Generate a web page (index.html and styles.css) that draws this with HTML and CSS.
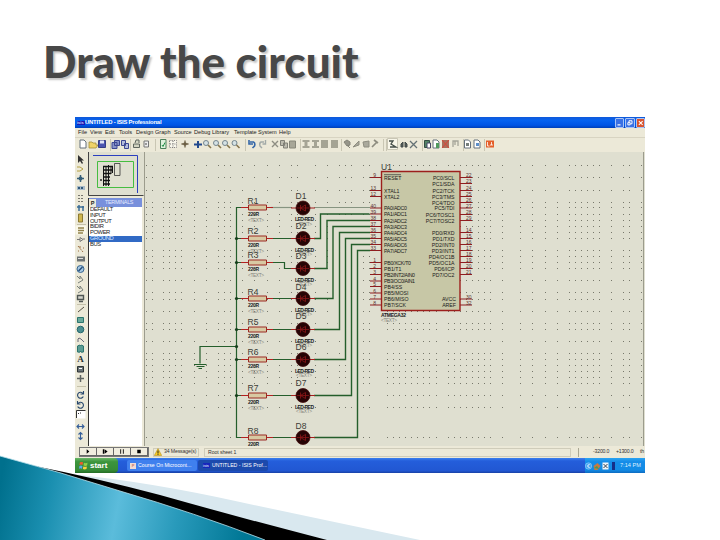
FILE: index.html
```html
<!DOCTYPE html>
<html lang="en">
<head>
<meta charset="utf-8">
<title>Draw the circuit</title>
<link rel="stylesheet" href="styles.css">
</head>
<body>
<main class="slide">
  <svg class="swoosh" viewBox="0 450 430 90" width="430" height="90">
    <defs>
      <linearGradient id="teal" gradientUnits="userSpaceOnUse" x1="0" y1="485" x2="245" y2="530">
        <stop offset="0" stop-color="#00708d"/><stop offset=".2" stop-color="#1a8fb0"/><stop offset=".48" stop-color="#5bbcdb"/><stop offset=".72" stop-color="#299abb"/><stop offset="1" stop-color="#007795"/>
      </linearGradient>
    </defs>
    <path d="M70 474Q150 482 240 502Q320 519 420 540H300Z" fill="#d9e8ef"/>
    <path d="M30 465Q100 479 160 495Q245 519 327 540H262Q150 502 30 465Z" fill="#000"/>
    <path d="M0 456Q60 472 120 491Q195 513 265 540H0Z" fill="url(#teal)"/>
    <path d="M0 456Q60 472 120 491Q195 513 265 540" fill="none" stroke="#b8dfeb" stroke-width=".8"/>
  </svg>

  <h1 class="title">Draw the circuit</h1>

  <section class="window">
    <header class="titlebar">
      <span class="app-icon">isis</span>
      <span class="caption">UNTITLED - ISIS Professional</span>
      <span class="win-buttons">
        <svg viewBox="0 0 10 10"><path d="M2 7.5h4" stroke="#fff" stroke-width="1.6"/></svg>
        <svg viewBox="0 0 10 10"><path d="M4 4V2h4v4H6M2.5 4.5h3v3h-3z" stroke="#fff" fill="none" stroke-width="1.3"/></svg>
        <svg class="close" viewBox="0 0 10 10"><path d="M2.5 2.5l5 5m0-5l-5 5" stroke="#fff" stroke-width="1.4"/></svg>
      </span>
    </header>
    <nav class="menu">
      <span>File</span><span>View</span><span>Edit</span><span>Tools</span><span>Design</span><span>Graph</span><span>Source</span><span>Debug</span><span>Library</span><span>Template</span><span>System</span><span>Help</span>
    </nav>

    <svg class="toolbar" viewBox="75 138 570 14" width="570" height="14">
      <defs>
        <g id="lens"><circle cx="-1" cy="-1" r="2.5" fill="#d5e2e4" stroke="#75868f"/><path d="M1 1l3 3" stroke="#85754c" stroke-width="1.6"/></g>
        <g id="page"><path d="M-3-4h4l2 2v6h-6z" fill="#fff" stroke="#65707c"/></g>
        <g id="block"><path d="M-3.500-4h7v2h-2v4h2v2h-7v-2h2v-4h-2z" fill="#a5a494"/></g>
      </defs>
      <path d="M110.500 139v12M130.500 139v12M155.500 139v12M245.500 139v12M300.500 139v12M341.500 139v12M383.500 139v12M386.500 139v12M422.500 139v12M463.500 139v12M484.500 139v12" stroke="#c9c6b3"/>
      <use href="#page" x="83" y="144"/>
      <path d="M89 148v-6h3l1 1h3v2h2l-2 3z" fill="#f0d36a" stroke="#9a8432" stroke-width=".7"/>
      <path d="M98.500 140.500h7v7h-7z" fill="#4a55b0" stroke="#363e86"/><path d="M100 140.500h4v3h-4z" fill="#dfe3f5"/>
      <path d="M112 142.500h5v6h-5zM114.500 140.500h5v5h-5z" fill="#8793c8" stroke="#3d4791"/>
      <path d="M121.500 140.500h4v5h-4zM124.500 143.500h4v5h-4z" fill="#b5bddd" stroke="#3d4791"/>
      <path d="M135 143l1-3h3v3M133.500 144h6v3.500h-6z" fill="#d2d4c2" stroke="#5f665f"/>
      <path d="M144 141h4.500v6H144z" fill="#eee" stroke="#777"/><path d="M145 144h2" stroke="#444"/>
      <path d="M160.500 139.500h5.500v9h-5.500z" fill="#dff0dc" stroke="#4c805b"/><path d="M162 145l1 1.500 2-4" fill="none" stroke="#1f8f46"/>
      <path d="M169.500 140.500h7v7h-7zM173 141v7M170 144h6" fill="#f9f8ed" stroke="#777" stroke-dasharray="1 1.200"/>
      <path d="M181.500 144h7M185 140.500v7" stroke="#6b5f44" stroke-width="1.300"/><circle cx="185" cy="144" r="1.700" fill="#6b5f44"/>
      <path d="M194 144.500h8M198 141v7" stroke="#224a8e" stroke-width="2"/>
      <use href="#lens" x="207" y="144"/><use href="#lens" x="217" y="144"/><use href="#lens" x="226" y="144"/><use href="#lens" x="235.500" y="144"/>
      <path d="M250 142h3.500q2 1 1 4l-2 2M249 140v4h4" fill="none" stroke="#3567a8" stroke-width="1.600"/>
      <path d="M264 142h-3q-2 1-1 4l2 2M265.500 140v4h-3" fill="none" stroke="#a2aaa8" stroke-width="1.400"/>
      <path d="M272 141l6 6m0-6l-6 6" stroke="#8e8e83" stroke-width="1.400"/>
      <path d="M280.500 140.500h4v5h-4zM283.500 143h4v5h-4z" fill="#bdbcaf" stroke="#808077"/>
      <path d="M289.500 141h6v7h-6z" fill="#a8a798" stroke="#88887b"/>
      <use href="#block" x="306" y="144"/><use href="#block" x="315.500" y="144"/>
      <path d="M321 140h7v8h-7zM331 140h7v8h-7z" fill="#a5a494"/>
      <path d="M344 142l3-2 3 2v3l-3 1zM347 145l3 3" fill="#969589" stroke="#858478"/>
      <path d="M353 147l6-6v4zM363 142l6-1v6h-5z" fill="#aaa99c" stroke="#8e8d80"/><path d="M372 147l5-5M374 140l4 3" stroke="#8e8d80" stroke-width="1.700"/>
      <path d="M387.500 138.500h10v11h-10z" fill="#f8f6e9" stroke="#c9c6b5"/><path d="M389 141h4l-2 3 5 3h-6" fill="none" stroke="#444d48" stroke-width="1.300"/>
      <path d="M401 147v-3l2-2v5zM405 147v-5l2 2v3z" fill="#56615e" stroke="#404946"/>
      <path d="M410 141l7 7m0-7l-7 7" stroke="#657275" stroke-width="1.300"/>
      <path d="M424.500 140.500h5v7h-5z" fill="#538366" stroke="#334d43"/><path d="M427 143h3.500v5H427z" fill="#fff" stroke="#446"/>
      <use href="#page" x="436" y="144"/><path d="M436 143h3v5h-3z" fill="#509b5e"/>
      <path d="M442 140h7v8h-7z" fill="#a7715d"/><path d="M442 140l7 8m0-8l-7 8" stroke="#db4438"/>
      <path d="M453 147v-6h5v5M455 141v4" fill="none" stroke="#a5a599" stroke-width="1.300"/>
      <use href="#page" x="467.500" y="144"/><path d="M466 143h3v3h-3z" fill="#757d79"/>
      <use href="#page" x="477" y="144"/><path d="M476 143h3v3h-3z" fill="#5c8fca"/>
      <path d="M486 140.500h8v7h-8z" fill="#e45f2a"/><path d="M487.500 142v4h2m2-4v3m-1.500 0h3" fill="none" stroke="#fff" stroke-width=".8"/>
    </svg>

    <div class="workspace">
      <svg class="tools" viewBox="75 152 13 294" width="13" height="294">
        <path d="M77 224.500h9M77 304.500h9M77 386.500h9" stroke="#c5c1aa"/>
        <path d="M78 155v8l2-2 2 3 1-1-1.500-2.500H84z" fill="#333"/>
        <path d="M77 167h3l3 2-3 2h-3" fill="none" stroke="#b5a044"/>
        <path d="M77 178.500h7M80.500 175v7" stroke="#365f79" stroke-width="1.500"/><circle cx="80.500" cy="178.500" r="2" fill="#365f79"/>
        <path d="M77 186h8v4h-8z" fill="#a8bac8"/><path d="M78 188h6" stroke="#315a7c" stroke-width="2" stroke-dasharray="2 1"/>
        <path d="M78 195.500h6M78 198.500h6M78 201.500h6" stroke="#77766e" stroke-dasharray="2 1"/>
        <path d="M77 207h7M79 205v6M83 206v5" stroke="#3b6d96" stroke-width="1.500"/>
        <path d="M78.500 214h4v8h-4z" fill="#cfb64f" stroke="#8d7a32"/>
        <path d="M75.500 225.500h11v9h-11z" fill="#faf8ea"/><path d="M78 228h6M78 230.500h6M78 233h5" stroke="#92824c" stroke-width="1.300"/>
        <path d="M77 239.500h3v-2l3 2-3 2v-2M83 239h2" fill="none" stroke="#777"/>
        <path d="M78 246l5 6M78 251h1M83 248h1M79 247h2" stroke="#9b6e43" stroke-dasharray="2 1"/>
        <path d="M77 256.500h8v5h-8z" fill="#6c7273"/><path d="M78 258.500h5" stroke="#ddd"/>
        <circle cx="80.500" cy="269" r="3.500" fill="#a5c8e3" stroke="#39658f"/><path d="M78.500 271l4-4" stroke="#234a75" stroke-width="1.500"/>
        <path d="M77 276l3 3v-3l3 4M78 283l5-3M77 286l3 3v-3l3 4M78 293l5-3" fill="none" stroke="#777f7a"/>
        <path d="M77.500 295.500h6v4h-6zM79 301.500h4" fill="#d4d5cd" stroke="#505754" stroke-width="1.400"/>
        <path d="M78 312l6-5" stroke="#554f43"/>
        <path d="M77.500 317.500h6v5h-6z" fill="#69a99c" stroke="#2b756e"/>
        <circle cx="80.500" cy="329.500" r="3.300" fill="#4b8e91" stroke="#22666b"/>
        <path d="M78 342q-1-8 6 0" fill="none" stroke="#667"/>
        <path d="M77.500 346q3-2 3 0 0-2 3 0v6q-3 1-3-1 0 2-3 1z" fill="#5b9b93" stroke="#2b756e"/>
        <text class="letter" x="77.300" y="362">A</text>
        <path d="M77.500 366.500h6v5.500h-6z" fill="#697276" stroke="#2d3334"/><path d="M79 368.500h3" stroke="#fff"/>
        <path d="M77 378.500h7M80.500 375v7" stroke="#5f6462" stroke-width="1.500"/>
        <path d="M83 393.500a3 3 0 1 0 .3 3M83.500 391v3h-3" fill="none" stroke="#28486e" stroke-width="1.100"/>
        <path d="M78 403.500a3 3 0 1 1-.3 3M77.500 401v3h3" fill="none" stroke="#28486e" stroke-width="1.100"/>
        <path d="M76.500 410.500h9v8h-9z" fill="#fff"/><path d="M76.500 418v-7.500h9" fill="none" stroke="#333"/><path d="M78 413.500h1M80 413h1" stroke="#333"/>
        <path d="M77 426.500h7M79 424.500l-2 2 2 2m3-4l2 2-2 2M80.500 432.500v7M78.500 434.500l2-2 2 2m-4 3l2 2 2-2" fill="none" stroke="#365f9a" stroke-width="1.100"/>
      </svg>

      <aside class="side">
        <svg class="overview" viewBox="88 152 56 44" width="56" height="44">
          <path d="M88.500 152v43.500h55" fill="none" stroke="#444"/>
          <path d="M93 155.500h44.500V193" fill="none" stroke="#2b3fbf"/>
          <path d="M97.500 161.500h36v26h-36z" fill="none" stroke="#45bd40"/>
          <path d="M114.500 163.500h5.500v12h-5.500z" fill="none" stroke="#333" stroke-width=".8"/>
          <path d="M103.500 166v20M106 166v20M108.500 165v21M111 166v8M112.500 166v7" stroke="#111"/>
          <path d="M103 166.500h10M103 170h9M103 173.500h8M103 177h7M103 180.500h7M103 184h7M101 179v2" stroke="#111" stroke-width="1.300"/>
        </svg>
        <div class="picker">
          <div class="picker-head"><b>P</b><span>TERMINALS</span></div>
          <ul>
            <li>DEFAULT</li><li>INPUT</li><li>OUTPUT</li><li>BIDIR</li><li>POWER</li><li class="on">GROUND</li><li>BUS</li>
          </ul>
        </div>
      </aside>

      <svg class="sheet" viewBox="144 152 501 294" width="501" height="294">
        <defs>
          <path id="r" stroke="#77786b" stroke-width="1" d="M146 .5h1M152 .5h1M163 .5h1M169 .5h1M175 .5h1M181 .5h1M194 .5h1M206 .5h1M218 .5h1M224 .5h1M230 .5h1M242 .5h1M254 .5h1M267 .5h1M279 .5h1M291 .5h1M297 .5h1M315 .5h1M327 .5h1M339 .5h1M345 .5h1M351 .5h1M363 .5h1M369 .5h1M387 .5h1M393 .5h1M399 .5h1M405 .5h1M411 .5h1M417 .5h1M423 .5h1M429 .5h1M436 .5h1M448 .5h1M454 .5h1M460 .5h1M466 .5h1M472 .5h1M478 .5h1M484 .5h1M490 .5h1M502 .5h1M520 .5h1M532 .5h1M545 .5h1M557 .5h1M569 .5h1M575 .5h1M581 .5h1M587 .5h1M593 .5h1M599 .5h1M611 .5h1M623 .5h1M629 .5h1M641 .5h1"/>
          <g id="res">
            <path d="M241 0h7M267 0h6" stroke="#b32020"/>
            <path d="M248.500-2.500h18v5h-18z" fill="#d8c9a3" stroke="#9b2922"/>
            <text class="tiny" x="248" y="8.500" textLength="11">220R</text>
            <text class="ghost" x="248" y="14.500" textLength="16">&lt;TEXT&gt;</text>
          </g>
          <g id="led">
            <path d="M291 0h24" stroke="#a61e1e"/>
            <circle cx="303" cy="0" r="7" fill="#260405" stroke="#430b0b" stroke-width=".8"/>
            <path d="M297 0h12M300.500-3v6M305.500-3l-5 3 5 3z" fill="none" stroke="#8a1717" stroke-width=".8"/>
            <text class="tiny" x="295" y="13" textLength="19">LED-RED</text>
            <text class="ghost" x="296" y="17.500" textLength="16">&lt;TEXT&gt;</text>
          </g>
        </defs>
        <g>
          <use href="#r" y="165"/><use href="#r" y="177"/><use href="#r" y="190"/><use href="#r" y="202"/><use href="#r" y="207"/><use href="#r" y="214"/><use href="#r" y="220"/><use href="#r" y="226"/><use href="#r" y="232"/><use href="#r" y="238"/><use href="#r" y="250"/><use href="#r" y="256"/><use href="#r" y="262"/><use href="#r" y="268"/><use href="#r" y="280"/><use href="#r" y="292"/><use href="#r" y="299"/><use href="#r" y="311"/><use href="#r" y="323"/><use href="#r" y="329"/><use href="#r" y="341"/><use href="#r" y="353"/><use href="#r" y="359"/><use href="#r" y="365"/><use href="#r" y="371"/><use href="#r" y="377"/><use href="#r" y="383"/><use href="#r" y="395"/><use href="#r" y="407"/><use href="#r" y="437"/>
        </g>
        <path d="M144.500 152v294M643.500 152v294" stroke="#9c9c8d"/>

        <g fill="none" stroke="#245e2b" stroke-width="1.200">
          <path d="M241 207.500h-4.500v230h4.500M236.500 346.500h-36.500v17"/>
          <path d="M236.500 238.500h5M236.500 262.500h5M236.500 298.500h5M236.500 329.500h5M236.500 359.500h5M236.500 395.500h5"/>
          <path d="M271 207.500h20" stroke="#869480"/>
          <path d="M271 238.500h20M271 262.500h13.500v6h7M271 298.500h20M271 329.500h20M271 359.500h20M271 395.500h20M271 437.500h20"/>
          <path d="M314 207.500h56" stroke="#869480"/>
          <path d="M314 238.500h6.500v-24.500h49M314 268.500h13v-48h43M314 298.500h19v-72h37M314 329.500h25.500v-97h30.500M314 359.500h31.500v-121h24.500M314 395.500h37.500v-151h18.500M314 437.500h43.500v-187h12.500" stroke-width="1.400"/>
          <path d="M194 364.500h12.500M196.500 366.500h8M198.500 368.500h3.500"/>
        </g>
        <g fill="#163e1b"><circle cx="236.500" cy="238.500" r="1.600"/><circle cx="236.500" cy="262.500" r="1.600"/><circle cx="236.500" cy="298.500" r="1.600"/><circle cx="236.500" cy="329.500" r="1.600"/><circle cx="236.500" cy="346.500" r="1.600"/><circle cx="236.500" cy="359.500" r="1.600"/><circle cx="236.500" cy="395.500" r="1.600"/></g>

        <use href="#res" y="207.500"/><use href="#res" y="238.500"/><use href="#res" y="262.500"/><use href="#res" y="298.500"/><use href="#res" y="329.500"/><use href="#res" y="359.500"/><use href="#res" y="395.500"/><use href="#res" y="437.500"/>
        <use href="#led" y="208"/><use href="#led" y="238.500"/><use href="#led" y="268.500"/><use href="#led" y="298.500"/><use href="#led" y="329.500"/><use href="#led" y="359.500"/><use href="#led" y="395.500"/><use href="#led" y="437.500"/>
        <g class="ref">
          <text x="247.500" y="203.500">R1</text><text x="247.500" y="234">R2</text><text x="247.500" y="258">R3</text><text x="247.500" y="294.500">R4</text><text x="247.500" y="324.500">R5</text><text x="247.500" y="355">R6</text><text x="247.500" y="391">R7</text><text x="247.500" y="433.500">R8</text>
          <text x="295.500" y="198.500">D1</text><text x="295.500" y="229">D2</text><text x="295.500" y="259">D3</text><text x="295.500" y="290">D4</text><text x="295.500" y="319">D5</text><text x="295.500" y="350">D6</text><text x="295.500" y="386">D7</text><text x="295.500" y="428.500">D8</text>
          <text x="381" y="169.500">U1</text>
        </g>

        <path d="M370 177.500h11M370 190.500h11M370 196.500h11M370 208h11M370 214h11M370 220.500h11M370 226.500h11M370 232.500h11M370 238.500h11M370 244.500h11M370 250.500h11M370 262.500h11M370 268.500h11M370 274.500h11M370 281h11M370 286.500h11M370 293h11M370 299h11M370 305h11M460 177.500h12M460 183.500h12M460 190.500h12M460 196.500h12M460 202.500h12M460 208h12M460 214.500h12M460 220.500h12M460 232.500h12M460 238.500h12M460 244.500h12M460 250.500h12M460 256.500h12M460 262.500h12M460 268.500h12M460 274.500h12M460 299h12M460 305h12" stroke="#8f1d20"/>
        <path d="M381.500 171.500h78.500v139h-78.500z" fill="#c7c7a6" stroke="#9c1f1c" stroke-width="1.400"/>
        <path d="M384 174.700h17" stroke="#333" stroke-width=".7"/>
        <g class="pin">
          <text x="384" y="179.500">RESET</text><text x="384" y="192.500">XTAL1</text><text x="384" y="198.500">XTAL2</text>
          <text x="384" y="210" textLength="23">PA0/ADC0</text><text x="384" y="216" textLength="23">PA1/ADC1</text><text x="384" y="222.500" textLength="23">PA2/ADC2</text><text x="384" y="228.500" textLength="23">PA3/ADC3</text><text x="384" y="234.500" textLength="23">PA4/ADC4</text><text x="384" y="240.500" textLength="23">PA5/ADC5</text><text x="384" y="246.500" textLength="23">PA6/ADC6</text><text x="384" y="252.500" textLength="23">PA7/ADC7</text>
          <text x="384" y="264.500" textLength="27">PB0/XCK/T0</text><text x="384" y="270.500">PB1/T1</text><text x="384" y="276.500" textLength="31">PB2/INT2/AIN0</text><text x="384" y="283" textLength="31">PB3/OC0/AIN1</text><text x="384" y="288.500">PB4/SS</text><text x="384" y="295">PB5/MOSI</text><text x="384" y="301">PB6/MISO</text><text x="384" y="307">PB7/SCK</text>
        </g>
        <g class="pin right">
          <text x="454.500" y="179.500">PC0/SCL</text><text x="454.500" y="185.500">PC1/SDA</text><text x="454.500" y="192.500">PC2/TCK</text><text x="454.500" y="198.500">PC3/TMS</text><text x="454.500" y="204.500">PC4/TDO</text><text x="454.500" y="210">PC5/TDI</text><text x="454.500" y="216.500">PC6/TOSC1</text><text x="454.500" y="222.500">PC7/TOSC2</text>
          <text x="454.500" y="234.500">PD0/RXD</text><text x="454.500" y="240.500">PD1/TXD</text><text x="454.500" y="246.500">PD2/INT0</text><text x="454.500" y="252.500">PD3/INT1</text><text x="454.500" y="258.500">PD4/OC1B</text><text x="454.500" y="264.500">PD5/OC1A</text><text x="454.500" y="270.500">PD6/ICP</text><text x="454.500" y="276.500">PD7/OC2</text><text x="456" y="301">AVCC</text><text x="456" y="307">AREF</text>
        </g>
        <g class="pin num right">
          <text x="376" y="177">9</text><text x="376" y="190">13</text><text x="376" y="196">12</text><text x="376" y="207.500">40</text><text x="376" y="213.500">39</text><text x="376" y="220">38</text><text x="376" y="226">37</text><text x="376" y="232">36</text><text x="376" y="238">35</text><text x="376" y="244">34</text><text x="376" y="250">33</text><text x="376" y="262">1</text><text x="376" y="268">2</text><text x="376" y="274">3</text><text x="376" y="280.500">4</text><text x="376" y="286">5</text><text x="376" y="292.500">6</text><text x="376" y="298.500">7</text><text x="376" y="304.500">8</text>
          <text x="471.500" y="177">22</text><text x="471.500" y="183">23</text><text x="471.500" y="190">24</text><text x="471.500" y="196">25</text><text x="471.500" y="202">26</text><text x="471.500" y="207.500">27</text><text x="471.500" y="214">28</text><text x="471.500" y="220">29</text><text x="471.500" y="232">14</text><text x="471.500" y="238">15</text><text x="471.500" y="244">16</text><text x="471.500" y="250">17</text><text x="471.500" y="256">18</text><text x="471.500" y="262">19</text><text x="471.500" y="268">20</text><text x="471.500" y="274">21</text><text x="471.500" y="298.500">30</text><text x="471.500" y="304.500">32</text>
        </g>
        <text class="tiny" x="381" y="316.500" textLength="25">ATMEGA32</text>
        <text class="ghost" x="381" y="322" textLength="16">&lt;TEXT&gt;</text>
      </svg>
    </div>

    <footer class="status">
      <div class="sim">
        <svg viewBox="0 0 17 8"><path d="M7 1.500v5l3-2.500z"/></svg>
        <svg viewBox="0 0 17 8"><path d="M6 1.500h1.500v5H6zM8 1.500v5l3.500-2.500z"/></svg>
        <svg viewBox="0 0 17 8"><path d="M6.500 1.500h1v5h-1zM9.500 1.500h1v5h-1z"/></svg>
        <svg viewBox="0 0 17 8"><path d="M6.500 2h4v4h-4z"/></svg>
      </div>
      <div class="messages">
        <svg viewBox="0 0 8 8" width="8" height="8"><path d="M4 .5L7.700 7.500H.3z" fill="#f8cb27" stroke="#a98310" stroke-width=".5"/><path d="M4 2.500v3m0 .7v.8" stroke="#222"/></svg>
        <span>34 Message(s)</span>
      </div>
      <div class="sheet-name">Root sheet 1</div>
      <div class="coords"><span>-3200.0</span><span>+1300.0</span><span>th</span></div>
    </footer>

    <footer class="taskbar">
      <div class="start">
        <svg viewBox="0 0 10 10" width="9" height="9"><path d="M1 1.500q2-1 3.500 0L4 4.500q-2-1-3.500 0z" fill="#ef5b2c"/><path d="M5.500 2q2 1 4 0L9 5q-2 1-4 0z" fill="#8ed04a"/><path d="M.5 5.500q1.500-1 3.300 0L3.300 8.500Q1.500 7.500 0 8.500z" fill="#5aa7f0"/><path d="M4.800 6q2 1 4 0l-.5 3q-2 1-4 0z" fill="#fbd13c"/></svg>
        <span>start</span>
      </div>
      <div class="task"><i class="ppt">P</i><span>Course On Microcont...</span></div>
      <div class="task active"><i>isis</i><span>UNTITLED - ISIS Prof...</span></div>
      <div class="tray">
        <svg viewBox="0 0 32 10" width="32" height="10"><circle cx="3.500" cy="5" r="3.200" fill="#4aa5f0" stroke="#9bd5ff" stroke-width=".6"/><path d="M4.500 3L2.500 5l2 2" fill="none" stroke="#fff"/><path d="M8.500 5l4-3 3 3-3 4h-3z" fill="#c77843"/><path d="M9 7l3-2 2 3" fill="#469e50"/><path d="M17.500 1.500h6v7h-6z" fill="#f2f4f8"/><path d="M18.500 3l4 4m0-4l-4 4" stroke="#345"/><path d="M27 1h3v8h-3z" fill="#152e88"/></svg>
        <span>7:14 PM</span>
      </div>
    </footer>
  </section>
</main>
</body>
</html>
```
FILE: styles.css
```css
* { box-sizing: border-box; }
body { margin: 0; background: #fff; }
svg { display: block; }
.slide {
  position: relative;
  width: 720px;
  height: 540px;
  overflow: hidden;
  padding: 33px 75px 0;
  font-family: "Liberation Sans", Arial, sans-serif;
}
.swoosh { position: absolute; left: 0; bottom: 0; }
.title {
  margin: 0 0 0 -32px;
  height: 84px;
  font: 900 44px/57px Lato, "Open Sans", sans-serif;
  letter-spacing: 0;
  color: #484848;
  text-shadow: 2px 2px 2px #c4c4c4;
  white-space: nowrap;
}
.window {
  position: relative;
  width: 570px;
  height: 356px;
  display: flex;
  flex-direction: column;
  background: #ece9d8;
  font-size: 5.6px;
  line-height: 1;
  color: #222;
  white-space: nowrap;
}
.titlebar {
  height: 11px;
  display: flex;
  align-items: center;
  padding: 0 0 0 2px;
  background: linear-gradient(#1058d8, #0663f0 30%, #0055e5 75%, #0040b8);
  color: #fff;
  font-weight: 700;
}
.app-icon { width: 8px; font-size: 4px; background: #1a1ab4; color: #cdf; }
.caption { font-size: 5.900px; letter-spacing: -.22px; flex: 1; }
.win-buttons { display: flex; gap: 1px; }
.win-buttons svg { width: 9.500px; height: 10px; background: #3a71e4; border: .5px solid #a9c4f5; border-radius: 1px; }
.win-buttons .close { background: #d9552f; }
.menu {
  height: 10px;
  display: grid;
  align-items: center;
  grid-template-columns: 12px 15px 14px 17px 19px 19px 20px 18px 22px 24px 21px 20px;
  padding-left: 3px;
  border-bottom: 1px solid #d8d4c2;
}
.workspace { height: 294px; display: flex; }
.letter { font: 700 9px "Liberation Serif", serif; fill: #26302f; }
.side { width: 56px; display: flex; flex-direction: column; gap: 2px; }
.overview { background: #dfdfd0; }
.picker { flex: 1; margin-right: 2px; background: #fff; border-left: 1px solid #333; }
.picker-head { height: 9px; display: flex; align-items: center; background: #7890dc; color: #e6ebff; }
.picker-head b { width: 7px; height: 8px; background: #ece9d8; color: #222; line-height: 8px; text-align: center; }
.picker-head span { flex: 1; padding-left: 9px; font-size: 5.400px; letter-spacing: -.3px; }
.picker ul { list-style: none; margin: 0; padding: 0; }
.picker li { height: 5.800px; line-height: 5.800px; padding-left: 1px; font-size: 5.800px; letter-spacing: -.4px; }
.picker .on { background: #316ac5; color: #dbe8ff; }
.sheet { background: #dfdfd0; }
.tiny, .ghost, .pin, .ref { font-family: "Liberation Sans", Arial, sans-serif; fill: #222; }
.tiny { font-size: 5px; font-weight: 700; }
.ghost { font-size: 4.800px; fill: #85857b; }
.ref { font-size: 8.500px; fill: #3c3c36; }
.pin { font-size: 5.200px; fill: #20201a; }
.num { font-size: 5px; fill: #59322f; }
.right { text-anchor: end; }
.status { height: 12px; display: flex; align-items: center; padding-left: 4px; color: #333; }
.sim { display: flex; border: .5px solid #777; }
.sim svg { width: 17px; height: 8px; border-right: 1px solid #666; border-bottom: 1px solid #666; background: #f0eddf; }
.messages { width: 46px; margin-left: 4px; height: 9px; display: flex; align-items: center; gap: 2px; border: 1px solid #cfccba; font-size: 5.200px; letter-spacing: -.15px; }
.sheet-name { flex: 1; margin-left: 5px; height: 9px; padding: 1px 0 0 3px; border: 1px solid #cfccba; font-size: 5.200px; letter-spacing: -.1px; }
.coords { width: 67px; margin-left: 7px; height: 9px; padding: 1px 1px 0 14px; display: flex; justify-content: space-between; border-left: 1px solid #aaa793; font-size: 5.200px; letter-spacing: -.2px; }
.taskbar { height: 15px; display: flex; align-items: center; background: linear-gradient(#3c80ee, #245edb 20%, #2157d2 85%, #1941a5); color: #fff; }
.start {
  width: 43px;
  height: 15px;
  padding-left: 4px;
  display: flex;
  align-items: center;
  gap: 2px;
  border-radius: 0 4px 4px 0;
  background: linear-gradient(#69b768, #3c953c 25%, #368b36 80%, #246d25);
  font: 700 8px "Liberation Sans", sans-serif;
}
.task { width: 70px; margin-left: 9px; height: 11px; padding-left: 3px; display: flex; align-items: center; gap: 2px; border-radius: 2px; background: #3f80ee; font-size: 5.200px; }
.task.active { margin-left: 1px; padding-left: 5px; background: #1c4aad; }
.task i { width: 7px; font: 4px/5px "Liberation Sans", sans-serif; background: #1626bc; }
.task .ppt { width: 6px; line-height: 6px; text-align: center; background: #f0d9d2; color: #b33b27; }
.tray { width: 60px; height: 15px; margin-left: auto; display: flex; align-items: center; gap: 3px; background: linear-gradient(#2ba4f2, #158ce8 25%, #128be5 80%, #0e6bc0); font-size: 5.600px; color: #dff0ff; }
```
